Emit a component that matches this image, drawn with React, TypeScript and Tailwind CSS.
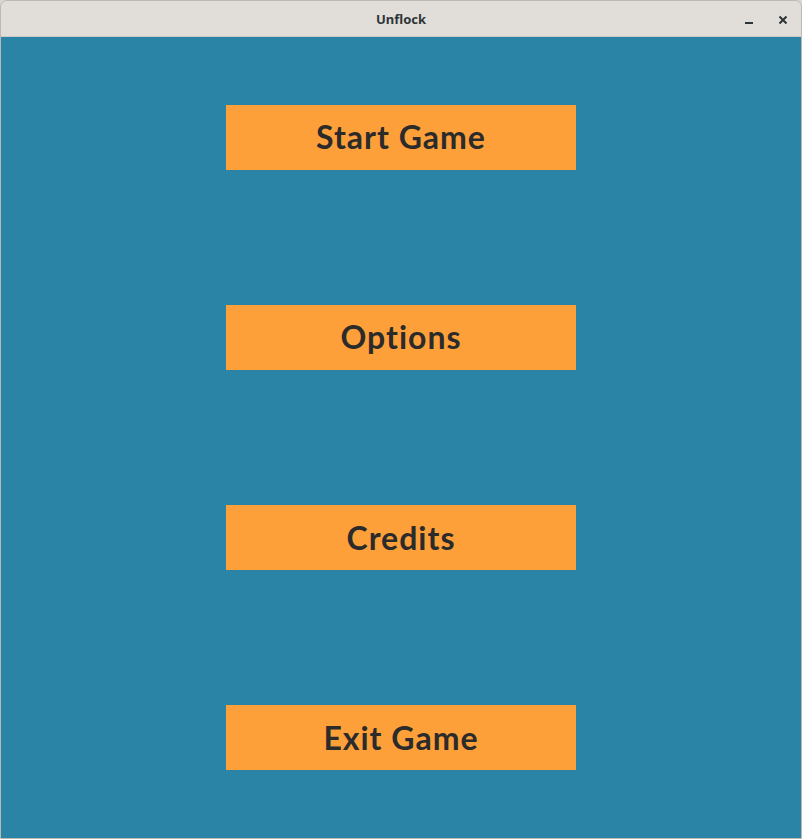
export default function App() {
  const items = ['Start Game', 'Options', 'Credits', 'Exit Game'];

  return (
    <div className="w-[802px] h-[839px] bg-[#d9d6d2] font-['Lato',sans-serif]">
      <div className="flex flex-col h-full border border-[#bdb8b3] rounded-t-[7px] overflow-hidden">
        {/* Title bar */}
        <div className="relative flex items-center justify-center h-[36px] pt-[3px] bg-[#e1deda] border-b border-[#cfcac5] shrink-0">
          <span className="text-[13px] font-bold text-[#2e3436] font-['Noto_Sans',sans-serif]">Unflock</span>
          <div className="absolute right-[12px] top-0 h-full pt-[3px] flex items-center gap-[22px]">
            <svg width="12" height="12" viewBox="0 0 12 12">
              <rect x="2" y="8" width="8" height="2" fill="#2e3436" />
            </svg>
            <svg width="12" height="12" viewBox="0 0 12 12">
              <path d="M2.5 2.5 L9.5 9.5 M9.5 2.5 L2.5 9.5" stroke="#2e3436" strokeWidth="2" />
            </svg>
          </div>
        </div>

        {/* Menu */}
        <div className="flex-1 bg-[#2a84a6] grid grid-rows-4">
          {items.map((label) => (
            <div key={label} className="flex items-center justify-center">
              <button className="w-[350px] h-[65px] bg-[#fea03a] text-[#2b2b2b] text-[32px] font-bold tracking-[1px]">
                {label}
              </button>
            </div>
          ))}
        </div>
      </div>
    </div>
  );
}
